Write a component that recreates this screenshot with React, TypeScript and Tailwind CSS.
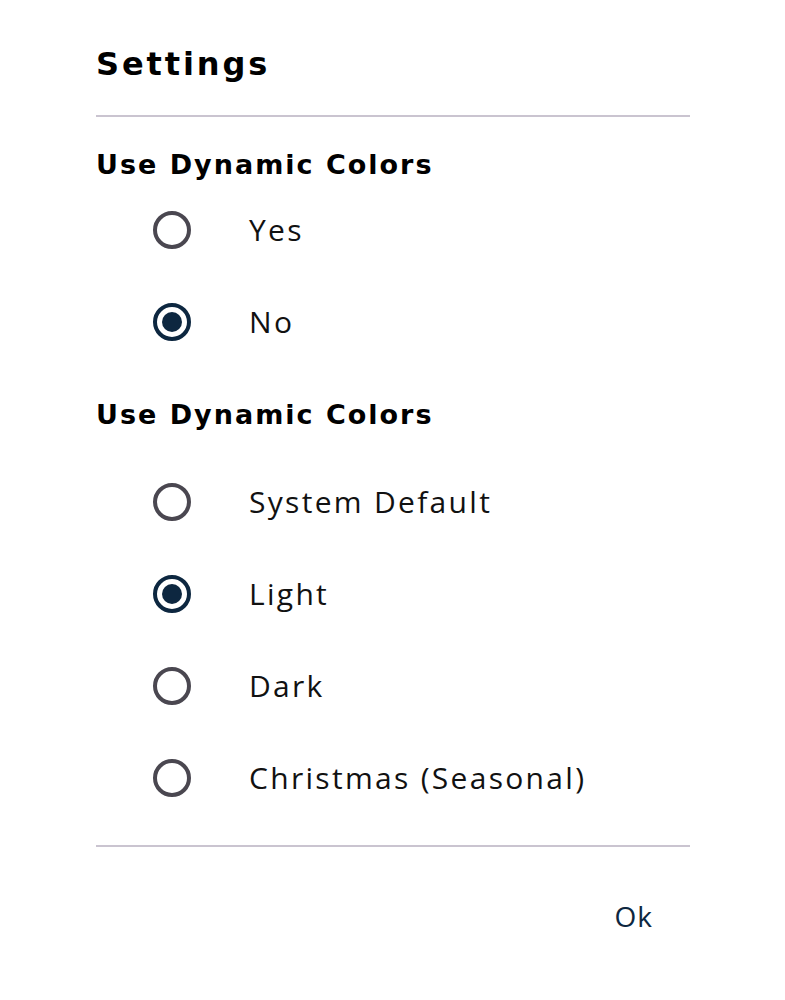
import React, { useState } from "react";

type Option = { id: string; label: string };

const colorOptions: Option[] = [
  { id: "yes", label: "Yes" },
  { id: "no", label: "No" },
];

const themeOptions: Option[] = [
  { id: "system", label: "System Default" },
  { id: "light", label: "Light" },
  { id: "dark", label: "Dark" },
  { id: "christmas", label: "Christmas (Seasonal)" },
];

const heading = { fontFamily: '"DejaVu Sans", sans-serif' };

function Radio({ checked }: { checked: boolean }) {
  return checked ? (
    <span className="w-[38px] h-[38px] rounded-full border-[4px] border-[#0d2740] flex items-center justify-center">
      <span className="w-[20px] h-[20px] rounded-full bg-[#0d2740]" />
    </span>
  ) : (
    <span className="w-[38px] h-[38px] rounded-full border-[4px] border-[#4a4750]" />
  );
}

function RadioGroup({
  options,
  value,
  onChange,
}: {
  options: Option[];
  value: string;
  onChange: (v: string) => void;
}) {
  return (
    <div className="flex flex-col">
      {options.map((o) => (
        <button
          key={o.id}
          onClick={() => onChange(o.id)}
          className="h-[92px] flex items-center pl-[57px] text-left"
        >
          <Radio checked={value === o.id} />
          <span className="ml-[58px] text-[30px] leading-[32px] tracking-[2.3px] text-[#111]">
            {o.label}
          </span>
        </button>
      ))}
    </div>
  );
}

export default function App() {
  const [dynamic, setDynamic] = useState("no");
  const [theme, setTheme] = useState("light");

  return (
    <div
      className="bg-white min-h-[1000px] w-[785px]"
      style={{ fontFamily: '"Open Sans", sans-serif' }}
    >
      <div className="ml-[96px] w-[594px]">
        <div className="h-[115px] pt-[13px] flex items-center">
          <h1 style={heading} className="text-[32px] font-bold leading-[40px] tracking-[2.9px] text-black">
            Settings
          </h1>
        </div>
        <div className="h-[2px] bg-[#cac4d0]" />

        <div className="h-[67px] pt-[35px]">
          <h2 style={heading} className="text-[27px] font-bold leading-[26px] tracking-[2px] text-black">
            Use Dynamic Colors
          </h2>
        </div>
        <RadioGroup options={colorOptions} value={dynamic} onChange={setDynamic} />

        <div className="h-[88px] pt-[34px]">
          <h2 style={heading} className="text-[27px] font-bold leading-[26px] tracking-[2px] text-black">
            Use Dynamic Colors
          </h2>
        </div>
        <RadioGroup options={themeOptions} value={theme} onChange={setTheme} />

        <div className="mt-[21px] h-[2px] bg-[#cac4d0]" />
        <div className="flex justify-end pr-[37px] pt-[53px]">
          <button className="text-[28px] leading-[32px] tracking-[1px] text-[#0d2740]">Ok</button>
        </div>
      </div>
    </div>
  );
}
